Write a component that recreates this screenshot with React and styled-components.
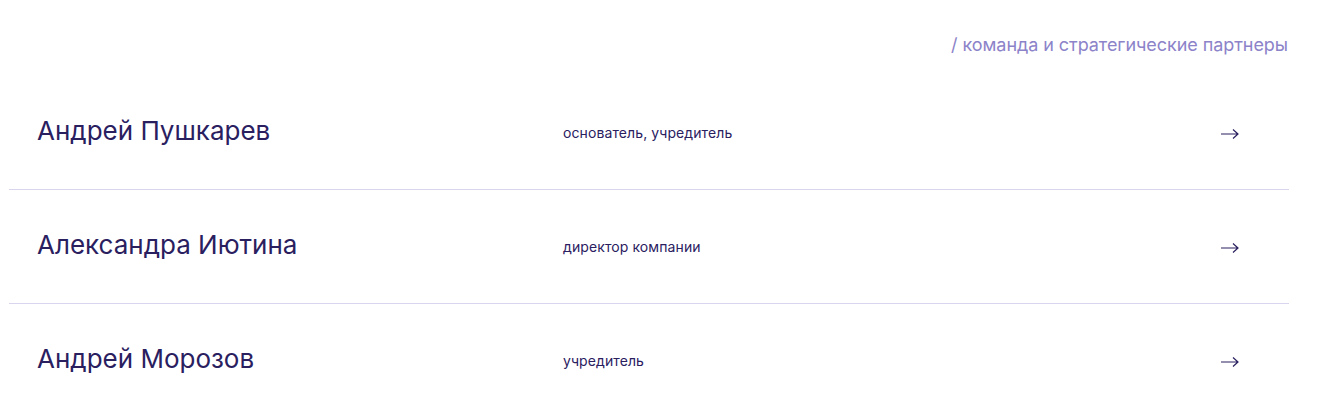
import styled, { createGlobalStyle } from 'styled-components';

const GlobalStyle = createGlobalStyle`
  body {
    margin: 0;
    background: #fff;
    font-family: Inter, 'Noto Sans', sans-serif;
  }
`;

const Section = styled.section`
  width: 1280px;
  margin-left: 9px;
  padding-top: 31px;
`;

const Heading = styled.div`
  text-align: right;
  padding-right: 1px;
  font-size: 18px;
  line-height: 28px;
  letter-spacing: -0.06px;
  color: #8c83c9;
  margin-bottom: 17px;
`;

const List = styled.ul`
  list-style: none;
  margin: 0;
  padding: 0;
`;

const Row = styled.li`
  display: flex;
  align-items: center;
  height: 113px;
  padding: 0 49px 0 28px;
  border-bottom: 1px solid #d9d5ef;
`;

const Name = styled.h3`
  margin: 0 0 4px;
  width: 526px;
  font-size: 26px;
  font-weight: 400;
  color: #2a205f;
`;

const Role = styled.p`
  margin: 0;
  flex: 1;
  font-size: 14px;
  letter-spacing: 0.1px;
  color: #2a205f;
`;

const Arrow = styled.svg`
  width: 20px;
  height: 12px;
  margin-top: 2px;
  color: #2a205f;
`;

const people = [
  { name: 'Андрей Пушкарев', role: 'основатель, учредитель' },
  { name: 'Александра Иютина', role: 'директор компании' },
  { name: 'Андрей Морозов', role: 'учредитель' },
];

const App = () => (
  <>
    <GlobalStyle />
    <Section>
      <Heading>/ команда и стратегические партнеры</Heading>
      <List>
        {people.map(p => (
          <Row key={p.name}>
            <Name>{p.name}</Name>
            <Role>{p.role}</Role>
            <Arrow viewBox="0 0 20 12" fill="none">
              <path d="M1 6h17M13 1.5 18 6l-5 4.5" stroke="currentColor" strokeWidth="1.2" />
            </Arrow>
          </Row>
        ))}
      </List>
    </Section>
  </>
);

export default App;
